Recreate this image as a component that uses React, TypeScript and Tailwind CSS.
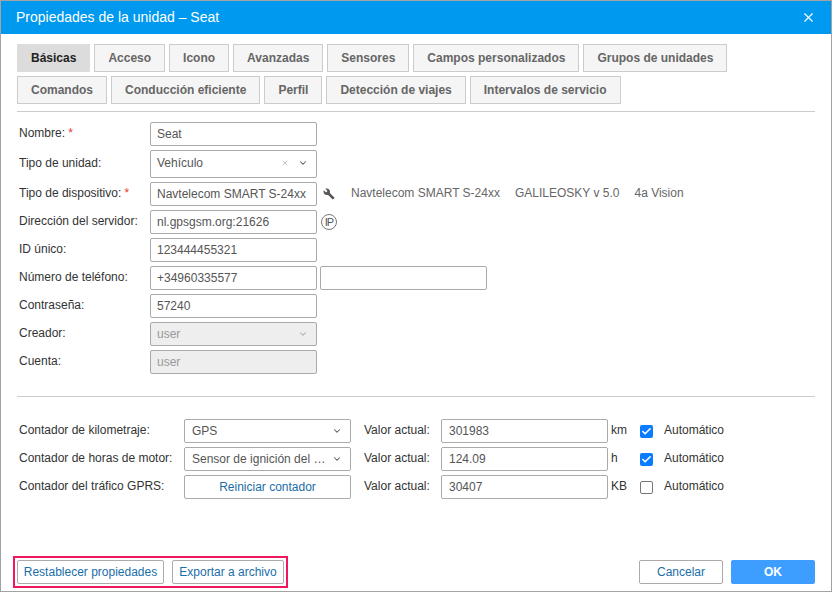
import React from 'react';
import { X, ChevronDown, Check } from 'lucide-react';

const tabsTop = ['Básicas', 'Acceso', 'Icono', 'Avanzadas', 'Sensores', 'Campos personalizados', 'Grupos de unidades'];
const tabsBottom = ['Comandos', 'Conducción eficiente', 'Perfil', 'Detección de viajes', 'Intervalos de servicio'];

const Tab: React.FC<{ label: string; active?: boolean }> = ({ label, active }) => (
  <div
    className={
      active
        ? 'h-[28px] px-[13px] flex items-center border border-[#dcdcdc] bg-[#dcdcdc] text-[#222] text-[12px] font-bold'
        : 'h-[28px] px-[13px] flex items-center border border-[#ccc] bg-[#f5f5f5] text-[#666] text-[12px] font-bold'
    }
  >
    {label}
  </div>
);

const Label: React.FC<{ text: string; required?: boolean; w: string }> = ({ text, required, w }) => (
  <div className={`${w} shrink-0 text-[12px] leading-[22px] text-[#333]`}>
    {text}
    {required && <span className="text-[#e53935]"> *</span>}
  </div>
);

const Field: React.FC<{ value?: string; w?: string; disabled?: boolean; wide?: boolean }> = ({
  value,
  w = 'w-[167px]',
  disabled,
  wide,
}) => (
  <div
    className={`${w} ${wide ? 'px-[7px]' : 'px-[6px]'} h-[24px] shrink-0 flex items-center rounded-[2px] border border-[#aaa] text-[12px] whitespace-nowrap overflow-hidden ${
      disabled ? 'bg-[#eee] text-[#999]' : 'bg-white text-[#555]'
    }`}
  >
    {value}
  </div>
);

const Select: React.FC<{ value: string; w?: string; disabled?: boolean; tall?: boolean; clear?: boolean; wide?: boolean }> = ({
  value,
  w = 'w-[167px]',
  disabled,
  tall,
  clear,
  wide,
}) => (
  <div
    className={`${w} ${tall ? 'h-[28px] pb-[2px]' : 'h-[24px]'} ${wide ? 'pl-[7px]' : 'pl-[6px]'} shrink-0 pr-[8px] flex items-center rounded-[2px] border border-[#aaa] text-[12px] ${
      disabled ? 'bg-[#eee] text-[#999]' : 'bg-white text-[#555]'
    }`}
  >
    <span className="flex-1 whitespace-nowrap">{value}</span>
    {clear && <X className="w-[8px] h-[8px] mr-[9px] text-[#aaa]" strokeWidth={2} />}
    <ChevronDown className={`w-[10px] h-[10px] ${disabled ? 'text-[#aaa]' : 'text-[#555]'}`} strokeWidth={2.5} />
  </div>
);

const Wrench = () => (
  <svg viewBox="0 0 24 24" className="w-[12px] h-[12px] fill-[#555]">
    <path d="M22.7 19l-9.1-9.1c.9-2.3.4-5-1.5-6.9-2-2-5-2.4-7.4-1.3L9 6 6 9 1.6 4.7C.4 7.1.9 10.1 2.9 12.1c1.9 1.9 4.6 2.4 6.9 1.5l9.1 9.1c.4.4 1 .4 1.4 0l2.3-2.3c.5-.4.5-1.1.1-1.4z" />
  </svg>
);

const Counter: React.FC<{ label: string; control: React.ReactNode; value: string; unit: string; auto: boolean }> = ({
  label,
  control,
  value,
  unit,
  auto,
}) => (
  <div className="flex h-[24px]">
    <Label text={label} w="w-[165px]" />
    {control}
    <div className="w-[90px] shrink-0 pl-[13px] text-[12px] leading-[22px] text-[#333]">Valor actual:</div>
    <Field value={value} wide />
    <div className="w-[32px] shrink-0 pl-[3px] text-[12px] leading-[22px] text-[#333]">{unit}</div>
    <div className="h-[24px] flex items-center">
      {auto ? (
        <div className="w-[13px] h-[13px] rounded-[2px] bg-[#0a7cff] flex items-center justify-center">
          <Check className="w-[11px] h-[11px] text-white" strokeWidth={3.5} />
        </div>
      ) : (
        <div className="w-[13px] h-[13px] rounded-[2px] border border-[#777] bg-white" />
      )}
    </div>
    <div className="pl-[11px] text-[12px] leading-[22px] text-[#333]">Automático</div>
  </div>
);

const LinkButton: React.FC<{ label: string; w: string }> = ({ label, w }) => (
  <div className={`${w} h-[24px] flex items-center justify-center rounded-[2px] border border-[#aaa] bg-white text-[12px] text-[#1a6ea8]`}>
    {label}
  </div>
);

export default function App() {
  return (
    <div className="w-[832px] h-[592px] flex flex-col bg-white border border-[#a3a3a3] font-['Liberation_Sans',sans-serif]">
      <div className="h-[33px] shrink-0 bg-[#0099f0] flex items-center justify-between pl-[15px] pr-[15px]">
        <span className="text-white text-[14px]">Propiedades de la unidad – Seat</span>
        <X className="w-[15px] h-[15px] text-white" strokeWidth={1.75} />
      </div>

      <div className="mx-[16px] mt-[10px] pb-[7px] border-b border-[#ccc] flex flex-col gap-[4px]">
        <div className="flex gap-[4px]">
          {tabsTop.map((t, i) => (
            <Tab key={t} label={t} active={i === 0} />
          ))}
        </div>
        <div className="flex gap-[4px]">
          {tabsBottom.map((t) => (
            <Tab key={t} label={t} />
          ))}
        </div>
      </div>

      <div className="mx-[16px] pl-[2px] pt-[10px] pb-[22px] border-b border-[#ccc] flex flex-col gap-[4px]">
        <div className="flex h-[24px]">
          <Label text="Nombre:" required w="w-[131px]" />
          <Field value="Seat" />
        </div>
        <div className="flex h-[28px]">
          <Label text="Tipo de unidad:" w="w-[131px] pt-[2px]" />
          <Select value="Vehículo" tall clear />
        </div>
        <div className="flex h-[24px]">
          <Label text="Tipo de dispositivo:" required w="w-[131px]" />
          <Field value="Navtelecom SMART S-24xx" />
          <div className="w-[34px] flex items-center pl-[6px]">
            <Wrench />
          </div>
          <div className="flex gap-[15px] text-[12px] leading-[22px] text-[#666]">
            <span>Navtelecom SMART S-24xx</span>
            <span>GALILEOSKY v 5.0</span>
            <span>4a Vision</span>
          </div>
        </div>
        <div className="flex h-[24px]">
          <Label text="Dirección del servidor:" w="w-[131px]" />
          <Field value="nl.gpsgsm.org:21626" />
          <div className="ml-[4px] w-[16px] h-[16px] mt-[4px] rounded-full border border-[#777] flex items-center justify-center text-[11px] tracking-[-1px] text-[#555]">
            IP
          </div>
        </div>
        <div className="flex h-[24px]">
          <Label text="ID único:" w="w-[131px]" />
          <Field value="123444455321" />
        </div>
        <div className="flex h-[24px] gap-[3px]">
          <Label text="Número de teléfono:" w="w-[128px]" />
          <Field value="+34960335577" />
          <Field />
        </div>
        <div className="flex h-[24px]">
          <Label text="Contraseña:" w="w-[131px]" />
          <Field value="57240" />
        </div>
        <div className="flex h-[24px]">
          <Label text="Creador:" w="w-[131px]" />
          <Select value="user" disabled />
        </div>
        <div className="flex h-[24px]">
          <Label text="Cuenta:" w="w-[131px]" />
          <Field value="user" disabled />
        </div>
      </div>

      <div className="mx-[16px] pl-[2px] pt-[22px] flex flex-col gap-[4px]">
        <Counter label="Contador de kilometraje:" control={<Select value="GPS" wide />} value="301983" unit="km" auto />
        <Counter
          label="Contador de horas de motor:"
          control={<Select value="Sensor de ignición del …" wide />}
          value="124.09"
          unit="h"
          auto
        />
        <Counter
          label="Contador del tráfico GPRS:"
          control={<LinkButton label="Reiniciar contador" w="w-[167px]" />}
          value="30407"
          unit="KB"
          auto={false}
        />
      </div>

      <div className="mt-auto mb-[3px] ml-[12px] mr-[16px] flex items-center justify-between">
        <div className="flex gap-[8px] p-[2px] border-2 border-[#f0185a]">
          <LinkButton label="Restablecer propiedades" w="w-[147px]" />
          <LinkButton label="Exportar a archivo" w="w-[112px]" />
        </div>
        <div className="flex gap-[8px]">
          <LinkButton label="Cancelar" w="w-[84px]" />
          <div className="w-[84px] h-[24px] flex items-center justify-center rounded-[2px] bg-[#3d9eff] text-white text-[12px] font-bold">
            OK
          </div>
        </div>
      </div>
    </div>
  );
}
